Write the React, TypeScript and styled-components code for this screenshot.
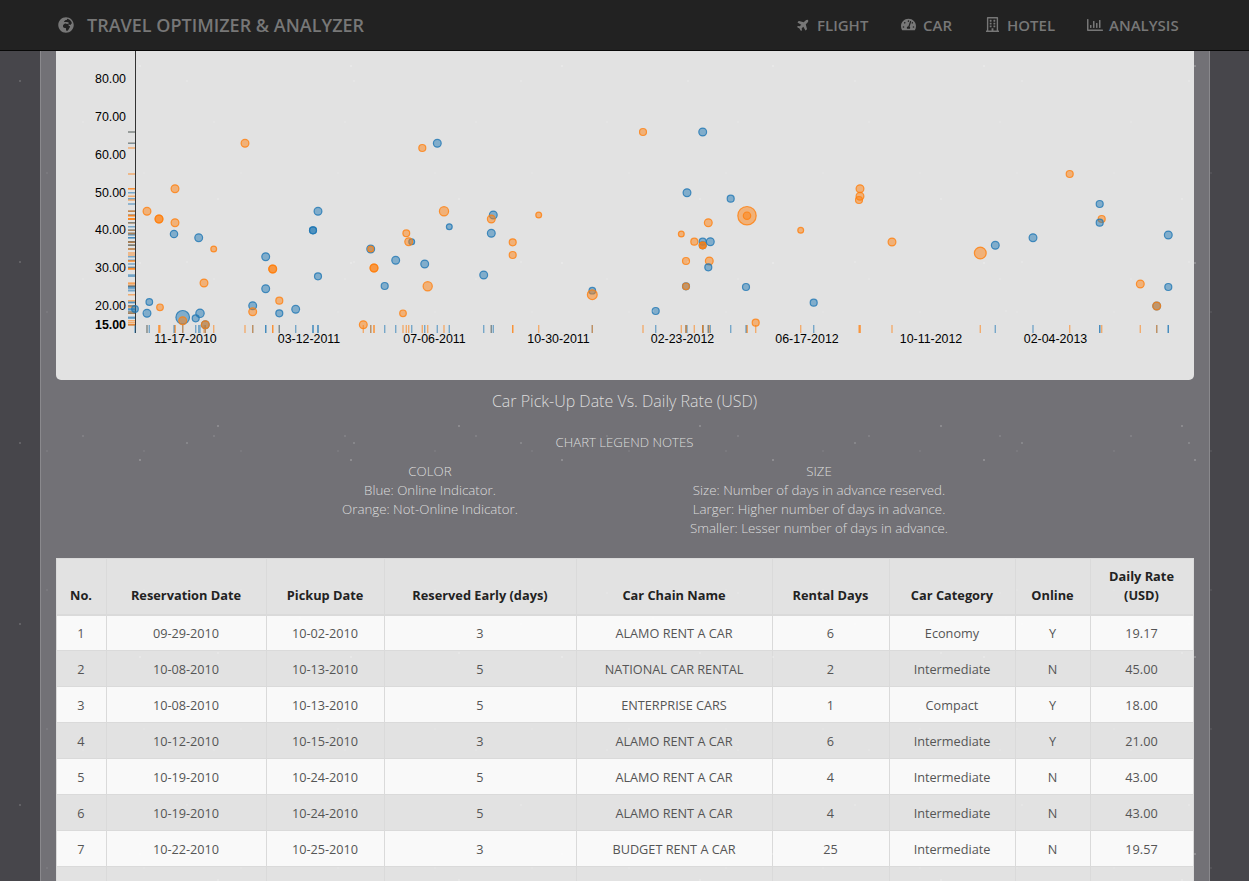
import React from "react";
import styled, { createGlobalStyle } from "styled-components";
import { FaGlobeAfrica, FaPlane, FaTachometerAlt, FaRegBuilding, FaRegChartBar } from "react-icons/fa";

const Global = createGlobalStyle`
  html, body { margin: 0; height: 100%; overflow: hidden; }
  body {
    background: #47464b;
    font-family: "Open Sans", "Liberation Sans", sans-serif;
    color: #555;
  }
  * { box-sizing: border-box; }
`;

const Page = styled.div`
  position: relative;
  height: 881px;
  overflow: hidden;
`;
const Grain = styled.div`
  position: absolute;
  inset: 51px 0 0;
  pointer-events: none;
  background-image:
    radial-gradient(circle at 20px 30px, rgba(255,255,255,.2) 0.6px, transparent 1px),
    radial-gradient(circle at 83px 71px, rgba(255,255,255,.14) 0.6px, transparent 1px),
    radial-gradient(circle at 140px 15px, rgba(255,255,255,.2) 0.7px, transparent 1.1px),
    radial-gradient(circle at 47px 122px, rgba(255,255,255,.12) 0.5px, transparent 0.9px),
    radial-gradient(circle at 218px 148px, rgba(255,255,255,.18) 0.7px, transparent 1.1px),
    radial-gradient(circle at 300px 260px, rgba(255,255,255,.16) 0.6px, transparent 1px);
  background-size: 167px 181px, 131px 157px, 211px 197px, 97px 139px, 241px 227px, 353px 307px;
`;
const Navbar = styled.nav`
  height: 51px;
  padding: 0 60px 1px 58px;
  background: #222;
  border-bottom: 1px solid #080808;
  display: flex;
  align-items: center;
  justify-content: space-between;
  color: #777;
`;
const Brand = styled.div`
  display: flex;
  align-items: center;
  gap: 13px;
  font-size: 18px;
  font-weight: 600;
`;
const NavList = styled.div`
  display: flex;
  align-items: center;
`;
const NavItem = styled.a<{ $w: number; $gap: number }>`
  display: flex;
  align-items: center;
  width: ${p => p.$w}px;
  gap: ${p => p.$gap}px;
  font-size: 15px;
  font-weight: 600;
  color: #777;
`;
const PlaneIcon = styled(FaPlane)`
  transform: rotate(-45deg);
  font-size: 13px;
`;
const BuildingIcon = styled(FaRegBuilding)`
  width: 13px;
  height: 17px;
`;
const Container = styled.main`
  width: 1170px;
  margin: 0 auto;
  height: 830px;
  background: #727176;
  border-left: 1px solid #8a898d;
  border-right: 1px solid #8a898d;
  padding: 0 15px;
  overflow: hidden;
`;
const ChartCard = styled.section`
  height: 329px;
  background: #e2e2e2;
  border-radius: 0 0 5px 5px;
  overflow: hidden;
`;
const ChartSvg = styled.svg`
  display: block;
  font-family: "Liberation Sans", Arial, sans-serif;
  font-size: 12.4px;
`;
const ChartTitle = styled.h2`
  margin: 10px 0 0;
  font-size: 16px;
  font-weight: 300;
  line-height: 22px;
  text-align: center;
  color: #dcdcdc;
`;
const LegendTitle = styled.h3`
  margin: 21px 0 0;
  font-size: 13.2px;
  font-weight: 300;
  line-height: 19px;
  text-align: center;
  color: #dcdcdc;
`;
const LegendGrid = styled.div`
  width: 778px;
  margin: 10px auto 0;
  display: grid;
  grid-template-columns: 1fr 1fr;
  font-size: 13.3px;
  font-weight: 300;
  line-height: 19px;
  text-align: center;
  color: #dcdcdc;
`;
const DataTable = styled.table`
  margin-top: 20px;
  width: 1137px;
  border-collapse: collapse;
  table-layout: fixed;
  font-size: 12.7px;
  background: #f9f9f9;
`;
const HeadCell = styled.th`
  height: 56px;
  padding: 7px 8px 9px;
  vertical-align: bottom;
  font-size: 12.8px;
  font-weight: 700;
  line-height: 19px;
  color: #222;
  background: #e2e2e2;
  border: 1px solid #dadada;
  border-bottom-width: 2px;
  text-align: center;
`;
const Row = styled.tr<{ $odd: boolean }>`
  background: ${p => (p.$odd ? "#f9f9f9" : "#e2e2e2")};
`;
const Cell = styled.td`
  height: 36px;
  padding: 2px 8px 0;
  text-align: center;
  color: #555;
  border: 1px solid #dadada;
  line-height: 19px;
`;

type Pt = [number, number, number, "b" | "o"];
const BLUE = "#1f77b4";
const ORANGE = "#ff7f0e";
const points: Pt[] = [
  [245,143.3,3.4,"o"],[175,188.7,3.4,"o"],[147,211.3,3.4,"o"],[159,219,3.4,"o"],[159,219,3.4,"o"],[175,222.7,3.4,"o"],
  [174,234,3.2,"b"],[198.7,237.7,3.4,"b"],[213.7,249,2.4,"o"],[204,283,3.4,"o"],[149.3,302,2.8,"b"],[160,307.3,2.8,"o"],
  [135,309,2.8,"b"],[147,313.3,3.4,"b"],[182.7,317.3,6.3,"b"],[182.7,320.7,3.4,"o"],[195.7,318.3,3,"b"],[200,313.3,3.7,"b"],
  [205.3,324.7,3.4,"b"],[205.3,324.7,3.4,"o"],[265.7,256.7,3.4,"b"],[265.7,288.7,3.4,"b"],[272.7,269,3.4,"o"],[272.7,269,3.4,"o"],
  [279.3,300.7,3,"o"],[252.7,305.7,3.4,"b"],[252.7,311.7,3.4,"o"],[279.3,313.3,3,"b"],[295.7,309.3,3.4,"b"],[318,211.3,3.4,"b"],
  [313,230.3,3,"b"],[313,230.3,3,"b"],[318,276.3,3,"b"],[363.3,324.7,3.4,"o"],[370.7,249,3.4,"b"],[370.7,249,2.4,"o"],[374,268,3.4,"o"],[374,268,3.4,"o"],
  [395.7,260.3,3.4,"b"],[384.7,286,3,"b"],[422.3,148,3,"o"],[437.3,143.3,3.4,"b"],[444,211.3,4.1,"o"],[493.3,215,3.4,"b"],[491.3,219,3.4,"o"],
  [538.7,215,2.4,"o"],[449.3,226.7,2.4,"b"],[406.3,233.3,2.9,"o"],[491.3,233.3,3.4,"b"],[512.7,242.3,3,"o"],[411.7,241.7,2.4,"b"],[408.7,241.7,3.4,"o"],
  [512.7,255,3,"o"],[424.7,264,3.4,"b"],[483.7,275,3.4,"b"],[427.7,286.3,4.1,"o"],[592.3,290.7,2.8,"b"],[592.3,294.7,4.4,"o"],[403,313.3,2.8,"o"],
  [643,132,3,"o"],[655.7,311,3,"b"],[702.7,132,3.4,"b"],[687,192.7,3.4,"b"],[730.7,198.7,3,"b"],[747,215.7,8.7,"o"],[747,215.7,3.2,"o"],
  [708.3,222.7,3.4,"o"],[681.3,234,2.4,"o"],[694.3,241.7,3,"o"],[702.7,241.7,3,"b"],[702.7,245.3,3,"b"],[702.7,245.3,2.8,"o"],[702.7,245.3,2.8,"o"],
  [710.3,241.7,3.4,"b"],[686,261,3,"o"],[709.3,261,3.4,"o"],[708.3,267.3,3,"b"],[686,286.3,3,"b"],[686,286.3,2.8,"o"],[746,287,3,"b"],
  [813.7,302.7,3,"b"],[755.7,322.7,3,"o"],[800.7,230.3,2.4,"o"],[860,188.7,3.4,"o"],[860,196.3,3.4,"o"],[859,200,3,"o"],[892,242,3.4,"o"],
  [980.3,253,5.4,"o"],[995.3,245.3,3.4,"b"],[1033,237.7,3.4,"b"],[1069.7,174,3,"o"],[1099.7,204,3,"b"],[1101.7,219,3,"o"],[1099.7,222.7,3,"b"],
  [1168.3,235,3.4,"b"],[1140.3,284,3.4,"o"],[1168.3,287,3,"b"],[1156.7,306,3.4,"b"],[1156.7,306,3.4,"o"],
];
const yTicks: [string, number][] = [["80.00",79],["70.00",116.7],["60.00",154.5],["50.00",192.5],["40.00",230],["30.00",267.5],["20.00",305.5],["15.00",324.5]];
const xTicks: [string, number][] = [["11-17-2010",185.5],["03-12-2011",309],["07-06-2011",434.5],["10-30-2011",558.5],["02-23-2012",682.5],["06-17-2012",807],["10-11-2012",931],["02-04-2013",1055.5]];

function ScatterChart() {
  return (
    <ChartSvg width={1138} height={329} viewBox="56 51 1138 329">
      <g fill="#000" textAnchor="end">
        {yTicks.map(([t, y]) => (
          <text key={t} x={126} y={y + 4.3} fontWeight={t === "15.00" ? 700 : 400}>{t}</text>
        ))}
      </g>
      <line x1={135.5} x2={135.5} y1={51} y2={333} stroke="#333" strokeWidth={1} />
      <g textAnchor="middle" fill="#000">
        {xTicks.map(([t, x]) => (
          <text key={t} x={x} y={342.5}>{t}</text>
        ))}
      </g>
      <g strokeWidth={1.4} strokeOpacity={0.55}>
        {points.map(([x, y, , c], i) => (
          <g key={i} stroke={c === "b" ? BLUE : ORANGE}>
            <line x1={x} x2={x} y1={325} y2={333} />
            <line x1={128} x2={135} y1={y} y2={y} />
          </g>
        ))}
      </g>
      <g>
        {points.map(([x, y, r, c], i) => (
          <circle
            key={i}
            cx={x}
            cy={y}
            r={r + 0.5}
            fill={c === "b" ? BLUE : ORANGE}
            fillOpacity={0.5}
            stroke={c === "b" ? BLUE : ORANGE}
            strokeOpacity={0.8}
            strokeWidth={1.2}
          />
        ))}
      </g>
    </ChartSvg>
  );
}

const columns: [string, number][] = [
  ["No.", 50],["Reservation Date", 160],["Pickup Date", 118],["Reserved Early (days)", 192],["Car Chain Name", 196],
  ["Rental Days", 117],["Car Category", 126],["Online", 75],["Daily Rate (USD)", 103],
];
const rows: string[][] = [
  ["1","09-29-2010","10-02-2010","3","ALAMO RENT A CAR","6","Economy","Y","19.17"],
  ["2","10-08-2010","10-13-2010","5","NATIONAL CAR RENTAL","2","Intermediate","N","45.00"],
  ["3","10-08-2010","10-13-2010","5","ENTERPRISE CARS","1","Compact","Y","18.00"],
  ["4","10-12-2010","10-15-2010","3","ALAMO RENT A CAR","6","Intermediate","Y","21.00"],
  ["5","10-19-2010","10-24-2010","5","ALAMO RENT A CAR","4","Intermediate","N","43.00"],
  ["6","10-19-2010","10-24-2010","5","ALAMO RENT A CAR","4","Intermediate","N","43.00"],
  ["7","10-22-2010","10-25-2010","3","BUDGET RENT A CAR","25","Intermediate","N","19.57"],
  ["","","","","","","","",""],
];

export default function App() {
  return (
    <Page>
      <Global />
      <Navbar>
        <Brand><FaGlobeAfrica size={16} />TRAVEL OPTIMIZER &amp; ANALYZER</Brand>
        <NavList>
          <NavItem $w={104} $gap={7}><PlaneIcon />FLIGHT</NavItem>
          <NavItem $w={85} $gap={7}><FaTachometerAlt size={15} />CAR</NavItem>
          <NavItem $w={101} $gap={8}><BuildingIcon />HOTEL</NavItem>
          <NavItem $w={102} $gap={6}><FaRegChartBar size={16} />ANALYSIS</NavItem>
        </NavList>
      </Navbar>
      <Container>
        <ChartCard><ScatterChart /></ChartCard>
        <ChartTitle>Car Pick-Up Date Vs. Daily Rate (USD)</ChartTitle>
        <LegendTitle>CHART LEGEND NOTES</LegendTitle>
        <LegendGrid>
          <div>COLOR<br />Blue: Online Indicator.<br />Orange: Not-Online Indicator.</div>
          <div>SIZE<br />Size: Number of days in advance reserved.<br />Larger: Higher number of days in advance.<br />Smaller: Lesser number of days in advance.</div>
        </LegendGrid>
        <DataTable>
          <colgroup>{columns.map(([n, w]) => <col key={n} width={w} />)}</colgroup>
          <thead><tr>{columns.map(([n]) => <HeadCell key={n}>{n}</HeadCell>)}</tr></thead>
          <tbody>
            {rows.map((r, i) => (
              <Row key={i} $odd={i % 2 === 0}>
                {r.map((c, j) => <Cell key={j}>{c}</Cell>)}
              </Row>
            ))}
          </tbody>
        </DataTable>
      </Container>
      <Grain />
    </Page>
  );
}
